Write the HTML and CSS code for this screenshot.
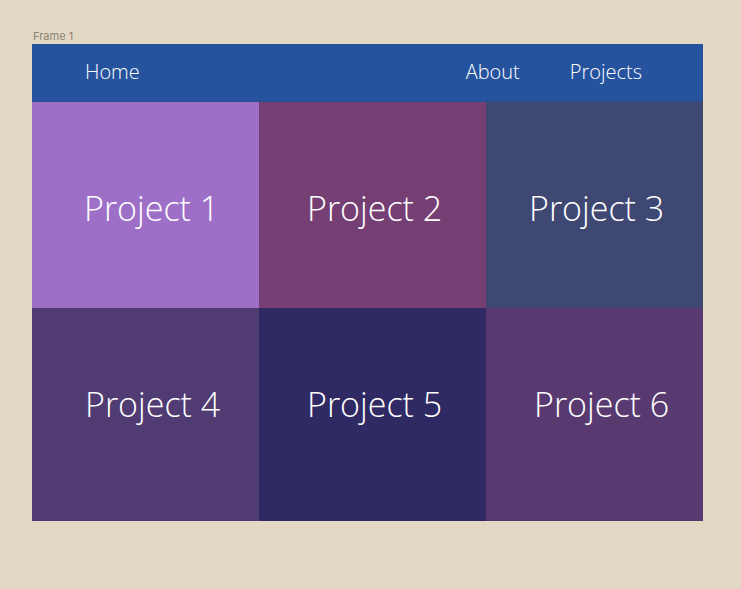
FILE: index.html
```html
<!DOCTYPE html>
<html>
<head>
<meta charset="utf-8">
<link rel="stylesheet" href="styles.css">
</head>
<body>
<div class="label">Frame 1</div>
<div class="frame">
  <nav class="nav">
    <a class="nav-home">Home</a>
    <div class="nav-right">
      <a>About</a>
      <a>Projects</a>
    </div>
  </nav>
  <div class="grid">
    <div class="cell c1 r1">Project 1</div>
    <div class="cell c2 r1">Project 2</div>
    <div class="cell c3 r1">Project 3</div>
    <div class="cell c4 r2">Project 4</div>
    <div class="cell c5 r2">Project 5</div>
    <div class="cell c6 r2">Project 6</div>
  </div>
</div>
</body>
</html>
```
FILE: styles.css
```css
html, body {
  margin: 0;
  padding: 0;
}
body {
  background: #e3d8c3;
  width: 741px;
  height: 589px;
  overflow: hidden;
  font-family: "Open Sans", "Noto Sans", sans-serif;
}
.label {
  margin: 29px 0 0 33px;
  height: 15px;
  font-family: Inter, "Noto Sans", sans-serif;
  font-size: 11px;
  line-height: 14px;
  color: #8c8272;
}
.frame {
  margin-left: 32px;
  width: 671px;
}
.nav {
  height: 57px;
  background: #26539e;
  border-bottom: 1px solid #2d4c8e;
  display: flex;
  align-items: center;
  justify-content: space-between;
  padding: 0 61px 0 53px;
  color: #ffffff;
  font-size: 20px;
  font-weight: 300;
}
.nav a {
  padding-bottom: 2px;
}
.nav-right {
  display: flex;
  gap: 50px;
}
.grid {
  display: grid;
  grid-template-columns: 227px 227px 217px;
  grid-template-rows: 206px 213px;
}
.cell {
  display: flex;
  align-items: center;
  color: #ffffff;
  font-size: 34px;
  font-weight: 300;
}
.r1 { padding-top: 6px; }
.r2 { padding-bottom: 22px; }
.c1 { background: #9e6fc7; padding-left: 52px; }
.c2 { background: #763f74; padding-left: 48px; }
.c3 { background: #3f4872; padding-left: 43px; }
.c4 { background: #503b73; padding-left: 53px; }
.c5 { background: #2f2a63; padding-left: 48px; }
.c6 { background: #583a71; padding-left: 48px; }
```
